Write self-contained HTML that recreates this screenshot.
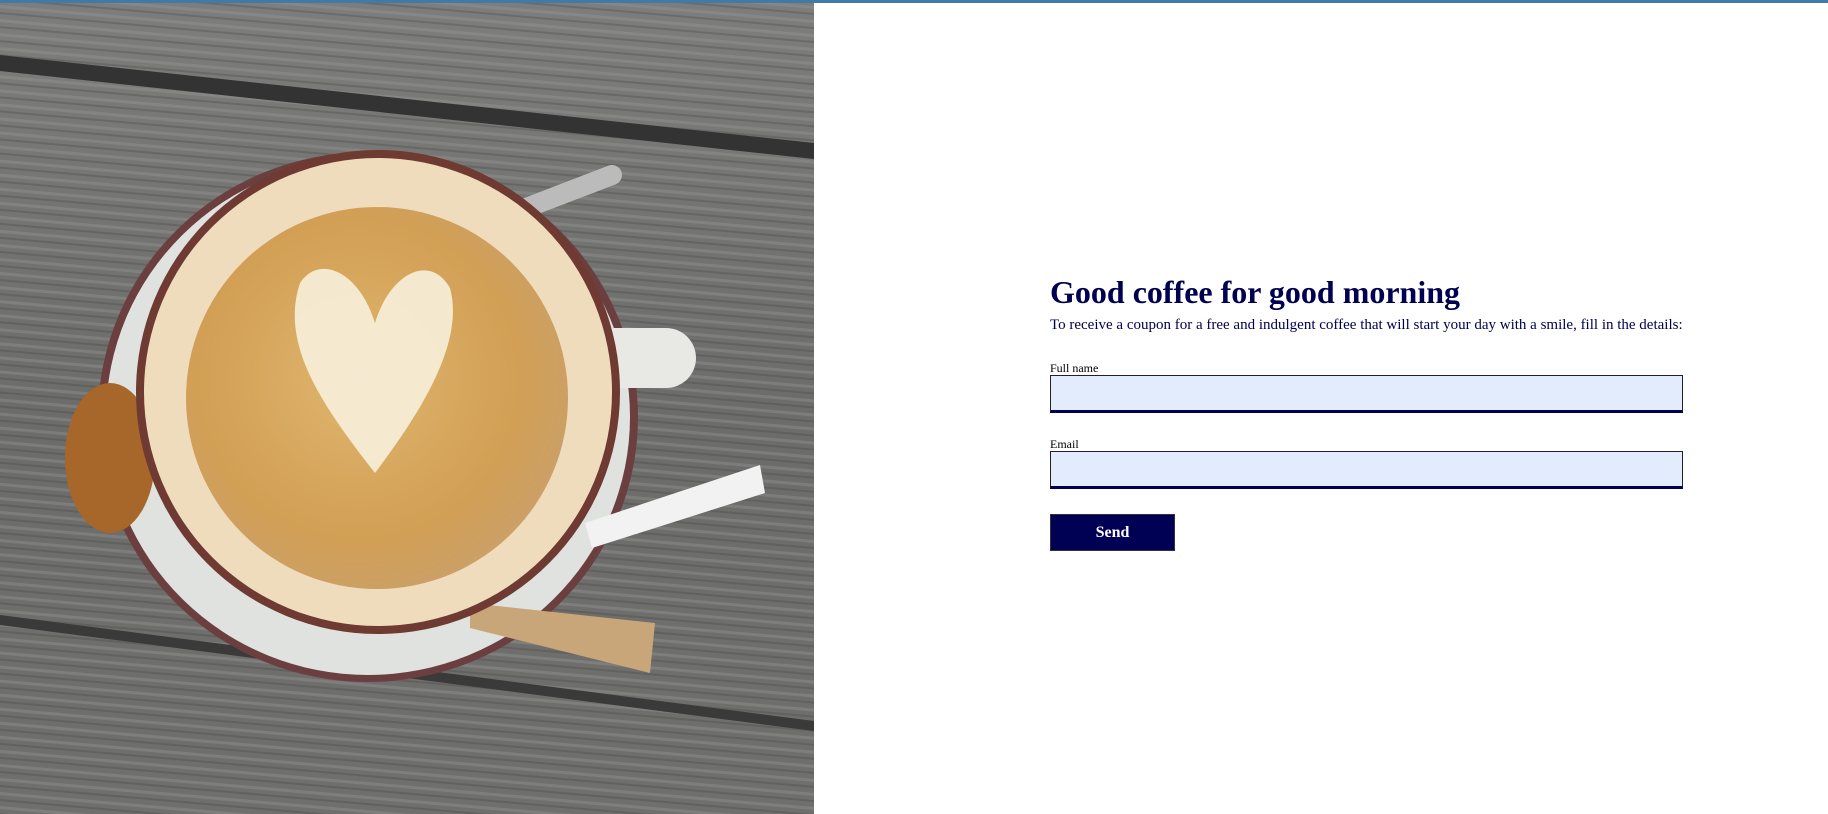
<!DOCTYPE html>
<html><head><meta charset="utf-8"><style>
html,body{margin:0;padding:0;width:1828px;height:814px;overflow:hidden;background:#fff}
.top{position:absolute;left:0;top:0;width:1828px;height:3px;background:#3f7aa8}
.img{position:absolute;left:0;top:3px;width:814px;height:811px;overflow:hidden}
h1{position:absolute;left:1050px;top:274px;margin:0;font:bold 32px "Liberation Serif",serif;color:#000050;white-space:nowrap}
p{position:absolute;left:1050px;top:317px;margin:0;font:15px "Liberation Serif",serif;color:#000050;white-space:nowrap}
.lb{position:absolute;left:1050px;font:12px "Liberation Serif",serif;color:#000}
.in{position:absolute;left:1050px;width:631px;height:34px;background:#e3ecfd;border:1px solid #222;border-bottom:3px solid #000050}
.btn{position:absolute;left:1050px;top:514px;width:123px;height:35px;background:#000055;border:1px solid #333;color:#fff;font:bold 16px "Liberation Serif",serif;text-align:center;line-height:35px}
</style></head><body>
<div class="top"></div>
<div class="img">
<svg width="814" height="811" viewBox="0 0 814 811">
<defs>
<linearGradient id="w" x1="0" y1="0" x2="0" y2="1">
<stop offset="0" stop-color="#7d7d7b"/><stop offset=".5" stop-color="#6c6c6a"/><stop offset="1" stop-color="#6f6f6d"/>
</linearGradient>
<radialGradient id="cf" cx=".45" cy=".45" r=".6">
<stop offset="0" stop-color="#e0b56e"/><stop offset=".7" stop-color="#d29f55"/><stop offset="1" stop-color="#caa06a"/>
</radialGradient>
<pattern id="st" width="814" height="14" patternUnits="userSpaceOnUse" patternTransform="rotate(5)">
<rect width="814" height="3" y="2" fill="#999" opacity=".35"/><rect width="814" height="2" y="9" fill="#444" opacity=".3"/>
</pattern>
</defs>
<rect width="814" height="811" fill="url(#w)"/>
<rect width="814" height="811" fill="url(#st)"/>
<path d="M0 52 L814 140 L814 156 L0 68Z" fill="#333"/>
<path d="M0 612 L814 718 L814 728 L0 622Z" fill="#3a3a3a"/>
<ellipse cx="368" cy="414" rx="270" ry="265" fill="#6b3f3f"/>
<ellipse cx="368" cy="414" rx="262" ry="258" fill="#dfe2df"/>
<rect x="560" y="325" width="136" height="60" rx="30" fill="#e8e9e4"/>
<line x1="500" y1="215" x2="612" y2="172" stroke="#bbb" stroke-width="20" stroke-linecap="round"/>
<path d="M585 520 L760 462 L765 490 L592 545Z" fill="#f2f2f2"/>
<path d="M470 600 L655 620 L650 670 L470 625Z" fill="#c9a67a"/>
<ellipse cx="110" cy="455" rx="45" ry="75" fill="#a7662a"/>
<circle cx="378" cy="389" r="242" fill="#6e3a32"/>
<circle cx="378" cy="389" r="234" fill="#efdcbd"/>
<circle cx="377" cy="395" r="191" fill="url(#cf)"/>
<path d="M375 470 C320 400 280 340 300 280 C320 250 360 270 375 320 C390 270 430 250 450 285 C465 340 420 410 375 470Z" fill="#f7efdc" opacity=".9"/>
</svg>
</div>
<h1>Good coffee for good morning</h1>
<p>To receive a coupon for a free and indulgent coffee that will start your day with a smile, fill in the details:</p>
<div class="lb" style="top:361px">Full name</div>
<div class="in" style="top:375px"></div>
<div class="lb" style="top:437px">Email</div>
<div class="in" style="top:451px"></div>
<div class="btn">Send</div>
</body></html>
